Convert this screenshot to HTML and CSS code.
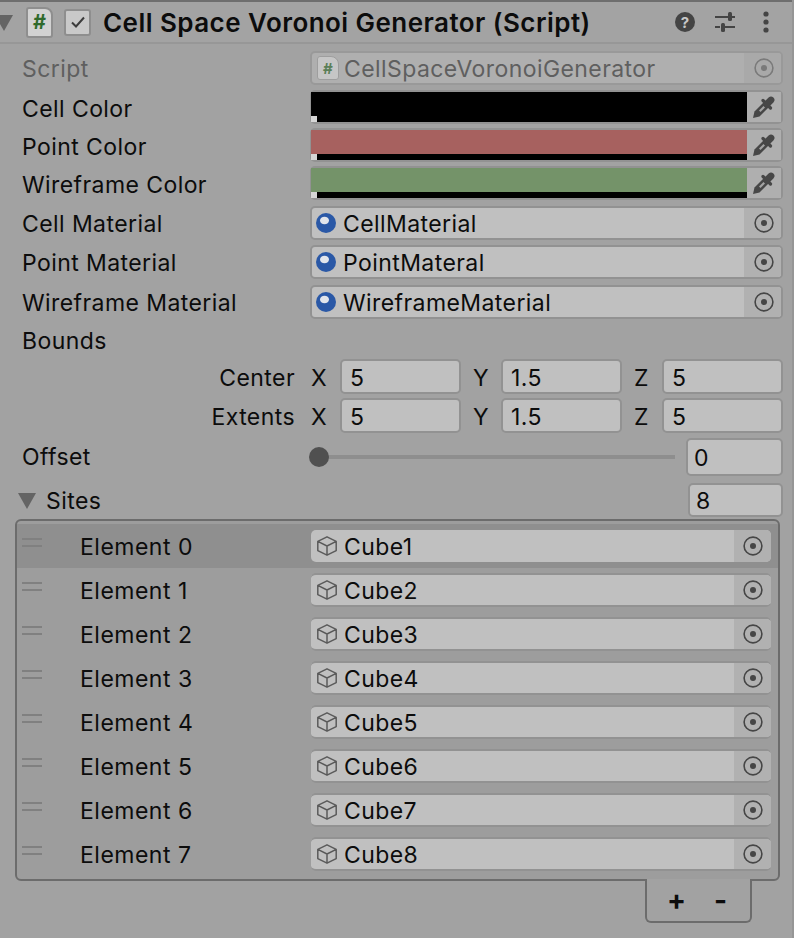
FILE: index.html
```html
<!DOCTYPE html>
<html lang="en">
<head>
    <meta charset="UTF-8">
    <meta name="viewport" content="width=device-width, initial-scale=1.0">
    <title>Cell Space Voronoi Generator</title>
    <link rel="stylesheet" href="styles.css">
</head>
<body>
    <svg class="icon-defs" width="0" height="0">
        <symbol id="i-target" viewBox="0 0 20 20">
            <circle cx="10" cy="10" r="8.9" fill="none" stroke="currentColor" stroke-width="1.6"/>
            <circle cx="10" cy="10" r="3" fill="currentColor"/>
        </symbol>
        <symbol id="i-dropper" viewBox="0 0 24 24">
            <path d="M1 23 2.500 16.500 11.500 7.500 16.500 12.500 7.500 21.500Z" fill="currentColor"/>
            <path d="M7 15.500 11.500 11 13 12.500 8.500 17Z" fill="#a4a4a4"/>
            <path d="M11 5.500 18.500 13" fill="none" stroke="currentColor" stroke-width="3.200" stroke-linecap="round"/>
            <path d="M15 9 19 5" fill="none" stroke="currentColor" stroke-width="6.800" stroke-linecap="round"/>
        </symbol>
        <symbol id="i-cube" viewBox="0 0 20 20">
            <path d="M10 .8 19.200 5.400V14.600L10 19.200 .8 14.600V5.400ZM.8 5.400 10 10 19.200 5.400M10 10V19.200" fill="none" stroke="currentColor" stroke-width="1.500" stroke-linejoin="round"/>
        </symbol>
        <symbol id="i-material" viewBox="0 0 20 20">
            <circle cx="10" cy="10" r="10" fill="#2a58a6"/>
            <ellipse cx="8.500" cy="7.500" rx="4.500" ry="3.800" fill="#e2e5eb"/>
        </symbol>
    </svg>

    <header class="comp-header">
        <span class="foldout foldout-top"></span>
        <span class="script-icon">#</span>
        <span class="check-box">
            <svg width="16" height="14" viewBox="0 0 16 14"><path d="M2 7.500 6 11.500 14 2.500" fill="none" stroke="#3c3c3c" stroke-width="2"/></svg>
        </span>
        <h1 class="comp-title">Cell Space Voronoi Generator (Script)</h1>
        <div class="header-tools">
            <span class="help-icon">?</span>
            <svg width="22" height="22" viewBox="0 0 22 22" class="tool-icon">
                <path d="M1 6h13M18 6h3M1 16h5M10 16h11" stroke="#444" stroke-width="2" fill="none"/>
                <rect x="14" y="1" width="4" height="9" rx="1.500" fill="#444"/>
                <rect x="7" y="12" width="4" height="9" rx="1.500" fill="#444"/>
            </svg>
            <svg width="6" height="22" viewBox="0 0 6 22" class="tool-icon dots">
                <circle cx="3" cy="3" r="2.600" fill="#444"/>
                <circle cx="3" cy="11" r="2.600" fill="#444"/>
                <circle cx="3" cy="19" r="2.600" fill="#444"/>
            </svg>
        </div>
    </header>

    <main class="props">
        <div class="row row-40 is-disabled">
            <label class="prop-label">Script</label>
            <div class="field obj-field">
                <span class="script-icon small">#</span>
                <span class="field-text">CellSpaceVoronoiGenerator</span>
                <span class="target"><svg class="ic-target"><use href="#i-target"/></svg></span>
            </div>
        </div>

        <div class="row row-39">
            <label class="prop-label">Cell Color</label>
            <div class="field color-field">
                <div class="swatch">
                    <div class="swatch-main black"></div>
                    <div class="alpha-bar"><span class="alpha-tick"></span></div>
                </div>
                <span class="dropper"><svg class="ic-dropper"><use href="#i-dropper"/></svg></span>
            </div>
        </div>
        <div class="row row-38">
            <label class="prop-label">Point Color</label>
            <div class="field color-field">
                <div class="swatch">
                    <div class="swatch-main red"></div>
                    <div class="alpha-bar"><span class="alpha-tick"></span></div>
                </div>
                <span class="dropper"><svg class="ic-dropper"><use href="#i-dropper"/></svg></span>
            </div>
        </div>
        <div class="row row-38">
            <label class="prop-label">Wireframe Color</label>
            <div class="field color-field">
                <div class="swatch">
                    <div class="swatch-main green"></div>
                    <div class="alpha-bar"><span class="alpha-tick"></span></div>
                </div>
                <span class="dropper"><svg class="ic-dropper"><use href="#i-dropper"/></svg></span>
            </div>
        </div>

        <div class="row row-39">
            <label class="prop-label">Cell Material</label>
            <div class="field obj-field">
                <svg class="ic-obj"><use href="#i-material"/></svg>
                <span class="field-text">CellMaterial</span>
                <span class="target"><svg class="ic-target"><use href="#i-target"/></svg></span>
            </div>
        </div>
        <div class="row row-40">
            <label class="prop-label">Point Material</label>
            <div class="field obj-field">
                <svg class="ic-obj"><use href="#i-material"/></svg>
                <span class="field-text">PointMateral</span>
                <span class="target"><svg class="ic-target"><use href="#i-target"/></svg></span>
            </div>
        </div>
        <div class="row row-40">
            <label class="prop-label">Wireframe Material</label>
            <div class="field obj-field">
                <svg class="ic-obj"><use href="#i-material"/></svg>
                <span class="field-text">WireframeMaterial</span>
                <span class="target"><svg class="ic-target"><use href="#i-target"/></svg></span>
            </div>
        </div>

        <div class="row row-bounds">
            <label class="prop-label">Bounds</label>
        </div>
        <div class="row row-38">
            <label class="prop-label sub-label">Center</label>
            <div class="vector">
                <span class="axis">X</span><div class="field num-field">5</div>
                <span class="axis">Y</span><div class="field num-field">1.5</div>
                <span class="axis">Z</span><div class="field num-field">5</div>
            </div>
        </div>
        <div class="row row-40">
            <label class="prop-label sub-label">Extents</label>
            <div class="vector">
                <span class="axis">X</span><div class="field num-field">5</div>
                <span class="axis">Y</span><div class="field num-field">1.5</div>
                <span class="axis">Z</span><div class="field num-field">5</div>
            </div>
        </div>

        <div class="row row-40">
            <label class="prop-label">Offset</label>
            <div class="slider">
                <div class="slider-track"><span class="slider-knob"></span></div>
                <div class="field num-field slider-value">0</div>
            </div>
        </div>

        <div class="row row-sites">
            <span class="foldout"></span>
            <label class="prop-label sites-label">Sites</label>
            <div class="field num-field sites-size">8</div>
        </div>

        <section class="list">
            <div class="list-row is-selected">
                <span class="handle"></span><span class="el-label">Element 0</span>
                <div class="field obj-field"><svg class="ic-obj"><use href="#i-cube"/></svg><span class="field-text">Cube1</span><span class="target"><svg class="ic-target"><use href="#i-target"/></svg></span></div>
            </div>
            <div class="list-row">
                <span class="handle"></span><span class="el-label">Element 1</span>
                <div class="field obj-field"><svg class="ic-obj"><use href="#i-cube"/></svg><span class="field-text">Cube2</span><span class="target"><svg class="ic-target"><use href="#i-target"/></svg></span></div>
            </div>
            <div class="list-row">
                <span class="handle"></span><span class="el-label">Element 2</span>
                <div class="field obj-field"><svg class="ic-obj"><use href="#i-cube"/></svg><span class="field-text">Cube3</span><span class="target"><svg class="ic-target"><use href="#i-target"/></svg></span></div>
            </div>
            <div class="list-row">
                <span class="handle"></span><span class="el-label">Element 3</span>
                <div class="field obj-field"><svg class="ic-obj"><use href="#i-cube"/></svg><span class="field-text">Cube4</span><span class="target"><svg class="ic-target"><use href="#i-target"/></svg></span></div>
            </div>
            <div class="list-row">
                <span class="handle"></span><span class="el-label">Element 4</span>
                <div class="field obj-field"><svg class="ic-obj"><use href="#i-cube"/></svg><span class="field-text">Cube5</span><span class="target"><svg class="ic-target"><use href="#i-target"/></svg></span></div>
            </div>
            <div class="list-row">
                <span class="handle"></span><span class="el-label">Element 5</span>
                <div class="field obj-field"><svg class="ic-obj"><use href="#i-cube"/></svg><span class="field-text">Cube6</span><span class="target"><svg class="ic-target"><use href="#i-target"/></svg></span></div>
            </div>
            <div class="list-row">
                <span class="handle"></span><span class="el-label">Element 6</span>
                <div class="field obj-field"><svg class="ic-obj"><use href="#i-cube"/></svg><span class="field-text">Cube7</span><span class="target"><svg class="ic-target"><use href="#i-target"/></svg></span></div>
            </div>
            <div class="list-row">
                <span class="handle"></span><span class="el-label">Element 7</span>
                <div class="field obj-field"><svg class="ic-obj"><use href="#i-cube"/></svg><span class="field-text">Cube8</span><span class="target"><svg class="ic-target"><use href="#i-target"/></svg></span></div>
            </div>
        </section>
        <div class="list-footer">
            <span class="list-btn">+</span>
            <span class="list-btn">-</span>
        </div>
    </main>
</body>
</html>
```

FILE: styles.css
```css
* {
    box-sizing: border-box;
}
html, body {
    height: 100%;
}
body {
    margin: 0;
    overflow: hidden;
    background-color: #a2a2a2;
    border-right: 2px solid #969696;
    color: #0c0c0c;
    font-family: Inter, "Liberation Sans", sans-serif;
    font-size: 23px;
}
.icon-defs {
    display: block;
    height: 0;
}

/* component header */
.comp-header {
    display: flex;
    align-items: center;
    height: 44px;
    border-top: 2px solid #6e6e6e;
    border-bottom: 2px solid #979797;
    background-color: #a3a3a3;
}
.foldout {
    flex: none;
    width: 0;
    height: 0;
    border-left: 9px solid transparent;
    border-right: 9px solid transparent;
    border-top: 16px solid #646464;
}
.foldout-top {
    margin-left: -5px;
    margin-top: 2px;
}
.script-icon {
    display: flex;
    align-items: center;
    justify-content: center;
    width: 27px;
    height: 31px;
    margin-left: 13px;
    border: 2px solid #8e8e8e;
    border-radius: 3px 8px 3px 3px;
    background-color: #d2d2d2;
    color: #2f6a2c;
    font-weight: 700;
    font-size: 20px;
}
.script-icon.small {
    flex: none;
    width: 22px;
    height: 24px;
    margin-left: 5px;
    border-width: 1px;
    border-color: #9e9e9e;
    background-color: #c6c6c6;
    font-size: 15px;
}
.check-box {
    display: flex;
    align-items: center;
    justify-content: center;
    width: 27px;
    height: 27px;
    margin-left: 11px;
    border: 2px solid #8e8e8e;
    border-radius: 3px;
    background-color: #c9c9c9;
}
.comp-title {
    margin: 0 0 0 12px;
    font-size: 26px;
    font-weight: 600;
    letter-spacing: 0.45px;
    white-space: nowrap;
}
.header-tools {
    display: flex;
    align-items: center;
    margin-left: auto;
}
.help-icon {
    display: flex;
    align-items: center;
    justify-content: center;
    width: 20px;
    height: 20px;
    border-radius: 50%;
    background-color: #444;
    color: #c8c8c8;
    font-size: 15px;
    font-weight: 700;
}
.tool-icon {
    display: block;
    margin-left: 19px;
}
.dots {
    margin-left: 27px;
    margin-right: 23px;
}

/* inspector rows */
.props {
    padding: 5px 9px 0 22px;
}
.row {
    display: flex;
    align-items: center;
}
.row-40 {
    height: 40px;
}
.row-39 {
    height: 39px;
}
.row-38 {
    height: 38px;
}
.row-bounds {
    height: 36px;
}
.row-sites {
    height: 38px;
    margin-top: 5px;
    margin-left: -4px;
}
.prop-label {
    flex: none;
    width: 288px;
    letter-spacing: 0.42px;
    white-space: nowrap;
}
.is-disabled .prop-label,
.is-disabled .field-text {
    color: #5f5f5f;
}
.is-disabled .field {
    border-color: #999;
    background-color: #afafaf;
}
.is-disabled .target {
    background-color: #a9a9a9;
    color: #7a7a7a;
}
.is-disabled .script-icon {
    color: #5b7f58;
}
.sub-label {
    width: 273px;
    margin-right: 15px;
    text-align: right;
}

/* fields */
.field {
    display: flex;
    align-items: center;
    height: 34px;
    border: 2px solid #929292;
    border-radius: 5px;
    background-color: #c0c0c0;
    letter-spacing: 0.42px;
}
.obj-field {
    flex: 1;
    margin-bottom: 2px;
    overflow: hidden;
}
.ic-obj {
    flex: none;
    width: 20px;
    height: 20px;
    margin-left: 4px;
    color: #5a5a5a;
}
.field-text {
    margin-left: 7px;
    padding-top: 2px;
    white-space: nowrap;
}
.script-icon.small + .field-text {
    margin-left: 5px;
}
.target {
    display: flex;
    align-items: center;
    justify-content: center;
    width: 37px;
    height: 100%;
    margin-left: auto;
    padding-left: 3px;
    background-color: #b1b1b1;
    color: #464646;
}
.ic-target {
    width: 20px;
    height: 20px;
}
.color-field {
    flex: 1;
    height: 34px;
    margin-bottom: 4px;
    border-radius: 5px;
}
.swatch {
    flex: 1;
    display: flex;
    flex-direction: column;
    height: 100%;
    margin-left: -1px;
}
.swatch-main {
    flex: none;
    height: 24px;
}
.swatch-main.black {
    height: 30px;
    background-color: #000;
}
.swatch-main.black + .alpha-bar {
    height: 0;
}
.swatch-main.black + .alpha-bar .alpha-tick {
    top: -6px;
}
.swatch-main.red {
    background-color: #a7615f;
}
.swatch-main.green {
    background-color: #749369;
}
.alpha-bar {
    position: relative;
    height: 6px;
    background-color: #000;
}
.alpha-tick {
    position: absolute;
    left: 0;
    top: 0;
    width: 6px;
    height: 6px;
    background-color: #d6d6d6;
}
.dropper {
    display: flex;
    align-items: center;
    justify-content: center;
    width: 34px;
    height: 100%;
    background-color: #afafaf;
    color: #474747;
}
.ic-dropper {
    width: 24px;
    height: 24px;
}

/* vector fields */
.vector {
    flex: 1;
    display: grid;
    grid-template-columns: 30px 1fr 40px 1fr 40px 1fr;
    align-items: center;
}
.vector .field {
    height: 35px;
    margin-bottom: 4px;
    padding-top: 4px;
}
.axis {
    padding-left: 1px;
}
.axis ~ .axis {
    padding-left: 12px;
}
.num-field {
    padding-top: 2px;
    padding-left: 8px;
}

/* slider */
.slider {
    flex: 1;
    display: flex;
    align-items: center;
}
.slider-track {
    position: relative;
    flex: 1;
    height: 4px;
    margin-right: 11px;
    background-color: #8e8e8e;
}
.slider-knob {
    position: absolute;
    left: -1px;
    top: -8px;
    width: 20px;
    height: 20px;
    border-radius: 50%;
    background-color: #505050;
}
.slider-value {
    flex: none;
    width: 97px;
    height: 38px;
    padding-left: 6px;
}

/* sites list */
.sites-label {
    width: 642px;
    margin-left: 10px;
}
.sites-size {
    flex: none;
    width: 95px;
    margin-bottom: 2px;
    padding-left: 6px;
}
.list {
    width: 765px;
    margin: -1px 0 0 -7px;
    padding: 3px 0;
    border: 2px solid #6c6c6c;
    border-radius: 6px;
    background-color: #9d9d9d;
}
.list-row {
    display: flex;
    align-items: center;
    height: 44px;
    padding-right: 7px;
}
.list-row.is-selected {
    background-color: #8f8f8f;
}
.list-row .field {
    margin-bottom: 0;
    border-width: 0 0 2px 0;
    border-top: 2px solid #929292;
}
.list-row.is-selected .field {
    border: 0;
    height: 32px;
}
.list-row .ic-obj {
    margin-left: 6px;
}
.list-row .target {
    padding-left: 0;
}
.handle {
    flex: none;
    align-self: flex-start;
    width: 20px;
    height: 9px;
    margin: 14px 0 0 5px;
    border-top: 2px solid #808080;
    border-bottom: 2px solid #808080;
}
.el-label {
    flex: none;
    width: 231px;
    margin-left: 38px;
    padding-top: 2px;
    letter-spacing: 0.5px;
}
.list-footer {
    display: flex;
    align-items: center;
    gap: 28px;
    width: 107px;
    height: 44px;
    margin: -2px 0 0 623px;
    padding: 0 0 0 20px;
    border: 2px solid #6c6c6c;
    border-top: 0;
    border-radius: 0 0 6px 6px;
    background-color: #a2a2a2;
}
.list-btn {
    font-size: 28px;
    font-weight: 700;
    color: #0c0c0c;
}
```
